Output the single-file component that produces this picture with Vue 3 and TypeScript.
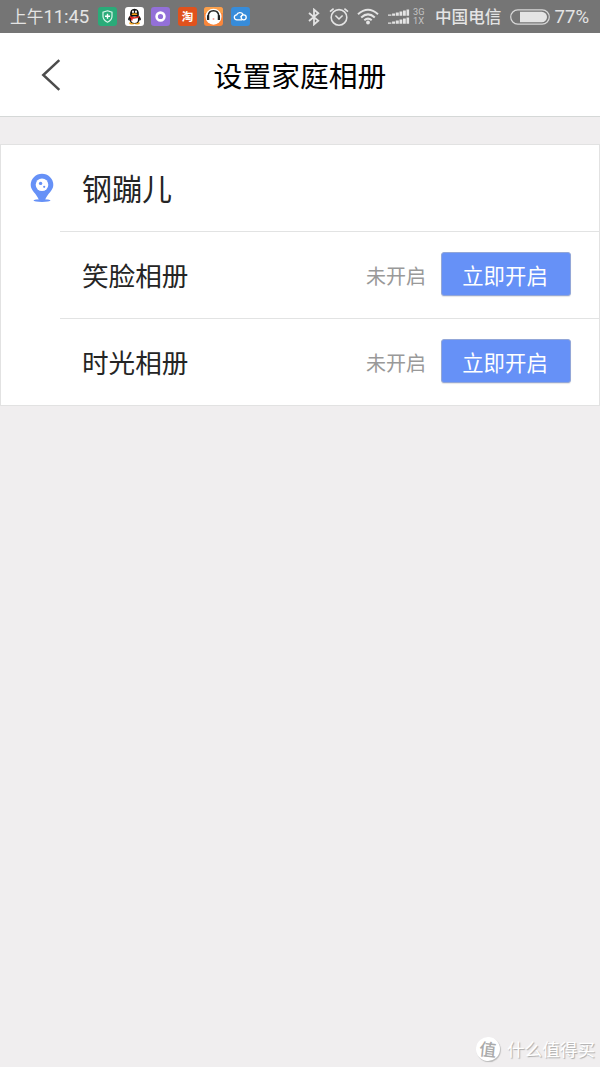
<script setup lang="ts">
interface Album {
  name: string
  status: string
  action: string
}

const person = '钢蹦儿'
const albums: Album[] = [
  { name: '笑脸相册', status: '未开启', action: '立即开启' },
  { name: '时光相册', status: '未开启', action: '立即开启' },
]
</script>

<template>
  <div class="screen">
    <div class="status-bar">
      <span class="clock">上午<span class="digits">11:45</span></span>
      <div class="apps">
        <svg viewBox="0 0 19 19">
          <rect width="19" height="19" rx="3" fill="#2aab79" />
          <path d="M9.5 3.8 L14 5.3 V9.3 Q14 13.2 9.5 15.2 Q5 13.2 5 9.3 V5.3 Z" fill="none" stroke="#d9f6ea" stroke-width="1.2" />
          <path d="M9.5 6.8 V11.8 M7 9.3 H12" stroke="#fff" stroke-width="1.4" />
        </svg>
        <svg viewBox="0 0 19 19">
          <rect width="19" height="19" rx="3" fill="#fff" />
          <path d="M5.5 8 Q2.6 11 3 13.6 L5 12 Z M13.5 8 Q16.4 11 16 13.6 L14 12 Z" fill="#111" />
          <ellipse cx="6.8" cy="16.2" rx="2.7" ry="1.3" fill="#f5a21b" />
          <ellipse cx="12.2" cy="16.2" rx="2.7" ry="1.3" fill="#f5a21b" />
          <ellipse cx="9.5" cy="11.9" rx="5.4" ry="4.6" fill="#111" />
          <ellipse cx="9.5" cy="12.5" rx="3.5" ry="3.6" fill="#fff" />
          <path d="M5.1 8 Q4.8 1.7 9.5 1.7 Q14.2 1.7 13.9 8 Q13.5 9.5 9.5 9.5 Q5.5 9.5 5.1 8 Z" fill="#111" />
          <ellipse cx="8" cy="4.8" rx="1" ry="1.3" fill="#fff" />
          <ellipse cx="11" cy="4.8" rx="1" ry="1.3" fill="#fff" />
          <ellipse cx="9.5" cy="7.2" rx="3" ry=".9" fill="#f5a21b" />
          <path d="M4.8 9 Q9.5 11.3 14.2 9 V10.6 Q11 12 7.6 11.7 V13.6 H5.8 V11.2 L4.8 10.6 Z" fill="#e32822" />
        </svg>
        <svg viewBox="0 0 19 19">
          <rect width="19" height="19" rx="3" fill="#9370d8" />
          <circle cx="9.5" cy="9.5" r="3.9" fill="none" stroke="#fff" stroke-width="2.6" />
        </svg>
        <svg viewBox="0 0 19 19">
          <rect width="19" height="19" rx="3" fill="#e0521d" />
          <text x="9.5" y="13.6" class="tao">淘</text>
        </svg>
        <svg viewBox="0 0 19 19">
          <rect width="19" height="19" rx="3" fill="#f9863b" />
          <path d="M3 0 H16 Q19 0 19 3 V6 H0 V3 Q0 0 3 0 Z" fill="#fba04c" />
          <circle cx="9.5" cy="9.7" r="8" fill="#fff" />
          <path d="M4.2 12 V9.3 Q4.4 3.8 9.5 3.8 Q14.6 3.8 14.8 9.3 V12" fill="none" stroke="#252525" stroke-width="1.5" />
          <path d="M4.1 8.3 V13 M14.9 8.3 V13" stroke="#252525" stroke-width="2.3" />
          <circle cx="9.5" cy="12" r="1" fill="#f3a39b" />
        </svg>
        <svg viewBox="0 0 19 19">
          <rect width="19" height="19" rx="3" fill="#378cda" />
          <path d="M11 12.8 H6 A2.5 2.5 0 0 1 5.7 7.8 A3.5 3.5 0 0 1 12 7.3 L9.6 10.1" fill="none" stroke="#fff" stroke-width="1.3" />
          <circle cx="12.7" cy="10.3" r="2.5" fill="none" stroke="#fff" stroke-width="1.3" />
        </svg>
      </div>
      <div class="spacer"></div>
      <svg class="bluetooth" viewBox="0 0 12 18">
        <path d="M1 5 L10.3 12.7 L6 16.4 V1.6 L10.3 5.3 L1 13" fill="none" stroke="#e4e4e4" stroke-width="1.8" />
      </svg>
      <svg class="alarm" viewBox="0 0 20 20">
        <circle cx="10" cy="10.4" r="7.8" fill="none" stroke="#e4e4e4" stroke-width="1.6" />
        <path d="M6.4 8.5 L10 12 L13.6 8.5" fill="none" stroke="#e4e4e4" stroke-width="1.6" />
        <path d="M1 4.6 L4.6 1.6 M19 4.6 L15.4 1.6" stroke="#e4e4e4" stroke-width="1.7" />
      </svg>
      <svg class="wifi" viewBox="0 0 22 17">
        <g fill="none" stroke="#e4e4e4" stroke-width="2">
          <path d="M1 6.2 Q11 -2.8 21 6.2" />
          <path d="M4.2 9.5 Q11 3.3 17.8 9.5" />
          <path d="M7.3 12.3 Q11 9 14.7 12.3" />
        </g>
        <circle cx="11" cy="14.5" r="1.9" fill="#e4e4e4" />
      </svg>
      <svg class="signal" viewBox="0 0 22 16">
        <g fill="#e4e4e4">
          <path d="M0 5.5h3.4v1.3h-3.4z M4.1 4.6h3v2.2h-3z M7.8 3.6h3v3.2h-3z M11.5 2.5h2.8v4.3h-2.8z M15 1.4h2.8v5.4h-2.8z M18.5 .5h2.6v6.3h-2.6z" />
          <path d="M0 13.5h3.4v1.3h-3.4z M4.1 12.6h3v2.2h-3z M7.8 11.6h3v3.2h-3z M11.5 10.5h2.8v4.3h-2.8z M15 9.4h2.8v5.4h-2.8z M18.5 8.5h2.6v6.3h-2.6z" />
        </g>
      </svg>
      <div class="network"><span>3G</span><span>1X</span></div>
      <span class="carrier">中国电信</span>
      <svg class="battery" viewBox="0 0 40 16">
        <rect x=".7" y=".9" width="38.6" height="14.2" rx="7.1" fill="none" stroke="#d8d8d8" stroke-width="1.2" />
        <path d="M10 2.7 H31.7 A5.3 5.3 0 0 1 31.7 13.3 H10 Z" fill="#e4e4e4" />
      </svg>
      <span class="percent">77%</span>
    </div>

    <header class="header">
      <svg class="back" viewBox="0 0 20 32">
        <path d="M18.3 1.2 L2.3 16 L18.3 30.8" fill="none" stroke="#4c4c4c" stroke-width="2.5" />
      </svg>
      <h1>设置家庭相册</h1>
    </header>

    <section class="card">
      <div class="row person">
        <svg class="pin" viewBox="0 0 24 30">
          <ellipse cx="12" cy="27.6" rx="8.5" ry="1.4" fill="#6691f7" />
          <path d="M12 .8 A11.3 11.3 0 0 1 23.3 12 C23.3 17.5 17.5 20.5 15 27 H9 C6.5 20.5 .7 17.5 .7 12 A11.3 11.3 0 0 1 12 .8 Z" fill="#6691f7" />
          <circle cx="12" cy="11.7" r="6.3" fill="#fff" />
          <circle cx="10.6" cy="10.4" r="1.7" fill="#6691f7" />
          <circle cx="14.2" cy="13.8" r="1.1" fill="#6691f7" />
        </svg>
        <span class="person-name">{{ person }}</span>
      </div>
      <div v-for="album in albums" :key="album.name" class="row album">
        <span class="album-name">{{ album.name }}</span>
        <span class="state">{{ album.status }}</span>
        <button class="enable" type="button">{{ album.action }}</button>
      </div>
    </section>

    <footer class="brand">
      <span class="seal">值</span>
      <span class="brand-name">什么值得买</span>
    </footer>
  </div>
</template>

<style>
body {
  background: #f0eeef;
}
</style>

<style scoped>
.screen {
  display: flex;
  flex-direction: column;
  box-sizing: border-box;
  width: 600px;
  height: 1067px;
  overflow: hidden;
  background: #f0eeef;
  font-family: "Noto Sans CJK SC", sans-serif;
}

.status-bar {
  display: flex;
  align-items: center;
  flex: none;
  box-sizing: border-box;
  height: 33px;
  padding: 0 10px;
  background: #757575;
  color: #e4e4e4;
  white-space: nowrap;
}

.clock {
  display: flex;
  align-items: center;
  width: 88px;
  font-size: 16.7px;
  line-height: 33px;
}

.digits,
.percent {
  font-family: Roboto, sans-serif;
  font-size: 18.6px;
}

.digits {
  padding-top: 1px;
  letter-spacing: -0.1px;
}

.apps {
  display: flex;
  gap: 7.6px;
}

.apps svg {
  display: block;
  width: 19px;
  height: 19px;
}

.tao {
  fill: #fff;
  font-size: 11.5px;
  font-weight: 700;
  text-anchor: middle;
}

.spacer {
  flex: 1;
}

.status-bar > svg {
  flex: none;
}

.bluetooth {
  width: 12px;
  height: 18px;
  margin-right: 9px;
}

.alarm {
  width: 20px;
  height: 20px;
  margin-right: 8.5px;
}

.wifi {
  width: 22px;
  height: 17px;
  margin-right: 9px;
}

.signal {
  width: 22px;
  height: 16px;
  margin-right: 3px;
}

.network {
  display: flex;
  flex-direction: column;
  width: 22px;
  padding-bottom: 1px;
  color: #c4c4c4;
  font: 9.2px/9px Roboto, sans-serif;
}

.carrier {
  width: 74.5px;
  font-size: 16.6px;
  font-weight: 500;
  line-height: 33px;
}

.battery {
  width: 40px;
  height: 16px;
  margin-right: 5px;
}

.percent {
  width: 35.5px;
}

.header {
  display: grid;
  grid-template-columns: 100px 1fr 100px;
  align-items: center;
  flex: none;
  box-sizing: border-box;
  height: 84px;
  border-bottom: 1px solid #d5d8d7;
  background: #fff;
}

.back {
  width: 20px;
  height: 32px;
  margin-left: 40.5px;
}

h1 {
  margin: 0;
  color: #000;
  font-size: 28.8px;
  font-weight: 400;
  line-height: 40px;
  text-align: center;
}

.card {
  flex: none;
  box-sizing: border-box;
  height: 262px;
  margin-top: 27px;
  border: 1px solid #e2e2e2;
  background: #fff;
  color: #252525;
}

.row {
  display: flex;
  align-items: center;
  box-sizing: border-box;
  height: 87px;
}

.person {
  height: 86px;
  padding-left: 28.5px;
}

.pin {
  width: 24px;
  height: 30px;
  margin-right: 28.5px;
}

.person-name {
  padding-bottom: 2px;
  font-size: 30px;
  line-height: 40px;
}

.album {
  margin-left: 59px;
  padding: 0 28px 0 22px;
  border-top: 1px solid #e2e3e3;
}

.album-name {
  flex: 1;
  font-size: 26.6px;
  line-height: 40px;
}

.state {
  margin-right: 15px;
  padding-top: 1px;
  color: #999;
  font-size: 20px;
  line-height: 30px;
}

.enable {
  box-sizing: border-box;
  width: 130px;
  height: 44px;
  margin-bottom: 2px;
  padding: 1px 2px 0 0;
  border: 1px solid #93a7d8;
  border-radius: 3px;
  background: #6691f7;
  box-shadow: 0 1px 1px rgba(0, 0, 0, 0.1);
  color: #fff;
  font: 21.4px/41px "Noto Sans CJK SC", sans-serif;
}

.brand {
  display: flex;
  align-items: center;
  justify-content: flex-end;
  margin-top: auto;
  padding: 0 5px 5px 0;
  color: #fff;
  text-shadow: 1px 1px 1px #aaa;
}

.seal {
  width: 24px;
  height: 24px;
  margin-right: 7px;
  border-radius: 50%;
  background: #fff;
  box-shadow: 1px 1px 1px #bbb;
  color: #aaa;
  font-size: 17px;
  font-weight: 500;
  line-height: 23px;
  text-align: center;
  text-shadow: none;
  transform: rotate(6deg);
}

.brand-name {
  font-size: 17.6px;
  line-height: 26px;
}
</style>
